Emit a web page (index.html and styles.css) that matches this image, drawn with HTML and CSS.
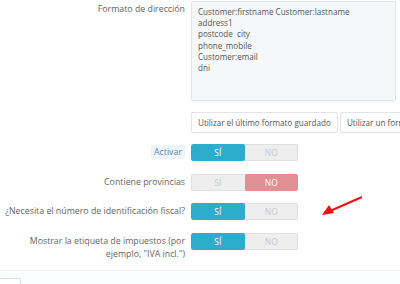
FILE: index.html
```html
<!DOCTYPE html>
<html lang="es">
<head>
    <meta charset="UTF-8">
    <meta name="viewport" content="width=device-width, initial-scale=1.0">
    <title>Formato de dirección</title>
    <link rel="stylesheet" href="styles.css">
</head>
<body>
    <div class="panel">
        <div class="form-group">
            <label class="control-label">Formato de dirección</label>
            <div class="controls">
                <div class="address-format">Customer:firstname Customer:lastname
address1
postcode&nbsp; city
phone_mobile
Customer:email
dni</div>
                <div class="btn-row">
                    <button class="btn">Utilizar el último formato guardado</button>
                    <button class="btn">Utilizar un formato predeterminado</button>
                </div>
            </div>
        </div>

        <div class="form-group switch-group">
            <label class="control-label"><span class="label-highlight">Activar</span></label>
            <div class="controls">
                <div class="switch">
                    <span class="switch-option on-yes">Sí</span>
                    <span class="switch-option">No</span>
                </div>
            </div>
        </div>

        <div class="form-group switch-group">
            <label class="control-label">Contiene provincias</label>
            <div class="controls">
                <div class="switch">
                    <span class="switch-option">Sí</span>
                    <span class="switch-option on-no">No</span>
                </div>
            </div>
        </div>

        <div class="form-group switch-group">
            <label class="control-label">¿Necesita el número de identificación fiscal?</label>
            <div class="controls">
                <div class="switch">
                    <span class="switch-option on-yes">Sí</span>
                    <span class="switch-option">No</span>
                </div>
            </div>
            <!-- red annotation arrow -->
            <svg class="arrow" width="44" height="22" viewBox="0 0 44 22">
                <line x1="42" y1="2" x2="10" y2="16" stroke="#f21010" stroke-width="2"/>
                <polygon points="2,20 9,10 14,18" fill="#f21010"/>
            </svg>
        </div>

        <div class="form-group switch-group">
            <label class="control-label">Mostrar la etiqueta de impuestos (por ejemplo, "IVA incl.")</label>
            <div class="controls">
                <div class="switch">
                    <span class="switch-option on-yes">Sí</span>
                    <span class="switch-option">No</span>
                </div>
            </div>
        </div>

        <div class="panel-footer">
            <button class="btn btn-footer"></button>
        </div>
    </div>
</body>
</html>
```

FILE: styles.css
```css
body {
    margin: 0;
    font-family: "Open Sans", "Liberation Sans", sans-serif;
    color: #666;
    background: #fff;
    overflow: hidden;
}
.panel {
    width: 400px;
    height: 284px;
    padding-top: 1px;
    box-sizing: border-box;
    overflow: hidden;
}
.form-group {
    display: grid;
    grid-template-columns: 185px 1fr;
    column-gap: 6px;
    position: relative;
}
.control-label {
    text-align: right;
    font-size: 8.8px;
    line-height: 13px;
    padding-top: 2px;
}
.controls {
    min-width: 0;
}
.address-format {
    box-sizing: border-box;
    width: 205px;
    height: 100px;
    background: #f5f8f9;
    border: 1px solid #dde6e9;
    border-radius: 2px;
    color: #555;
    font-size: 8.1px;
    line-height: 11.2px;
    padding: 4px 6px;
    white-space: pre;
}
.btn-row {
    display: flex;
    gap: 2px;
    margin-top: 11px;
    white-space: nowrap;
    overflow: hidden;
}
.btn {
    flex-shrink: 0;
    box-sizing: border-box;
    height: 21px;
    padding: 0 6px;
    background: #fff;
    border: 1px solid #e2e5e8;
    border-radius: 2px;
    font-family: inherit;
    font-size: 8.1px;
    color: #555;
}
.switch-group {
    margin-top: 11px;
}
.switch-group + .switch-group {
    margin-top: 12.5px;
}
.switch {
    display: flex;
    width: 107px;
    height: 17px;
    border-radius: 2px;
    background: #eee;
    box-shadow: inset 0 0 0 1px #e0e0e0;
    overflow: hidden;
}
.switch-option {
    flex: 1;
    text-align: center;
    font-size: 8.5px;
    line-height: 17px;
    text-transform: uppercase;
    color: #c8c8c8;
}
.on-yes {
    background: #2eacce;
    color: #fff;
    border-radius: 2px;
}
.on-no {
    background: #e08f95;
    color: #fff;
    border-radius: 2px;
}
.label-highlight {
    background: #edf5fa;
    color: #5d8aab;
    padding: 1px 3px;
    border-radius: 2px;
}
.arrow {
    position: absolute;
    left: 320px;
    top: -8px;
}
.panel-footer {
    margin-top: 9px;
    height: 14px;
    border-top: 1px solid #eef0f2;
    background: #fcfdfe;
    padding-top: 7px;
}
.btn-footer {
    display: block;
    width: 22px;
    margin-left: -1px;
    border-color: #d9dde0;
}
```
